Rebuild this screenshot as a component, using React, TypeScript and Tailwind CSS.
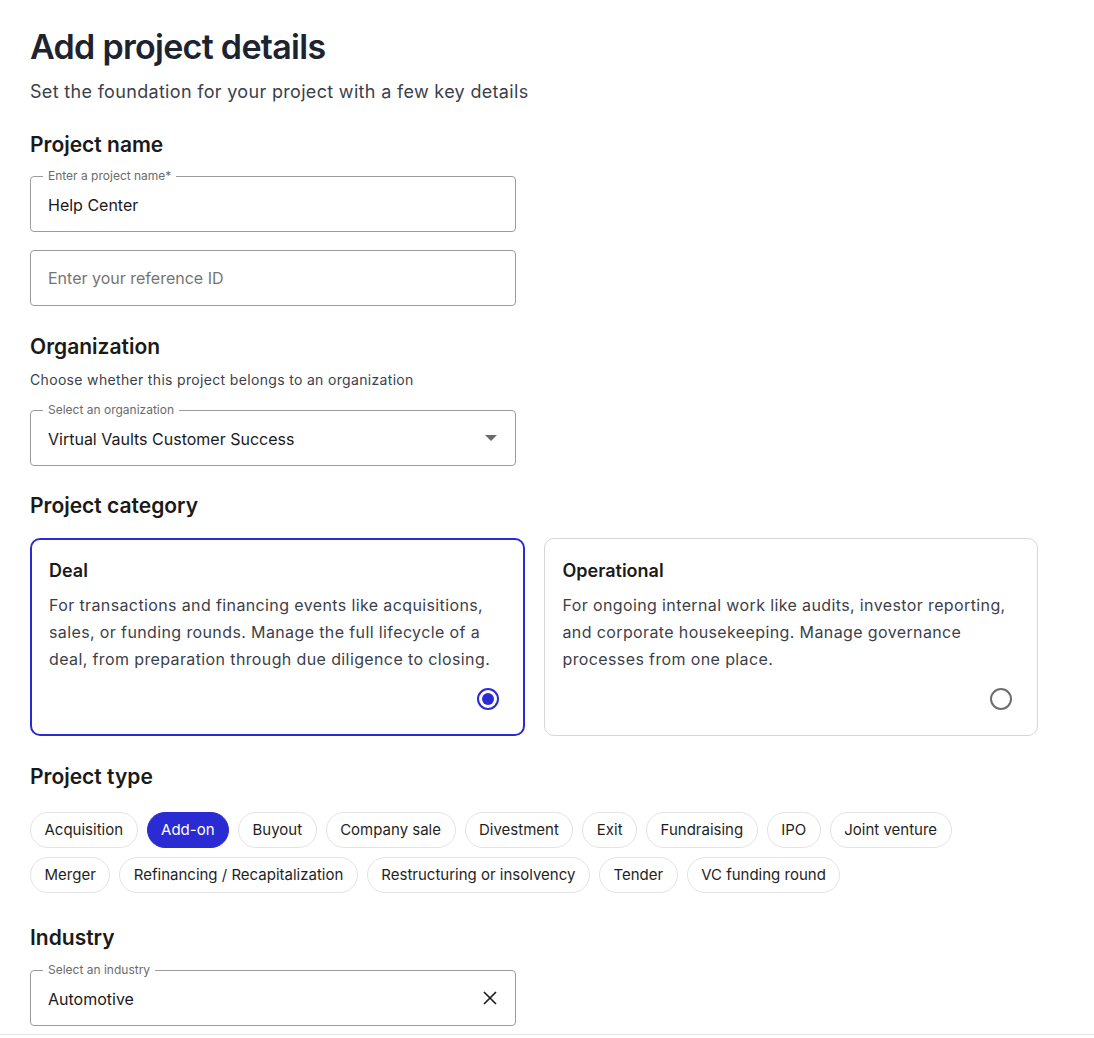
import React from "react";

const font = { fontFamily: "Inter, 'Noto Sans', sans-serif" };

function OutlinedField({ label, value, placeholder, right }: { label?: string; value?: string; placeholder?: string; right?: React.ReactNode }) {
  return (
    <div className="relative w-[486px] h-[56px] border border-[#9b9b9b] rounded-[4px] pl-[17px] pr-[18px] flex items-center">
      {label && (
        <div className="absolute left-[12px] -top-[8px] bg-white px-[5px] text-[12px] leading-[14px] text-[#6b6b6b]">{label}</div>
      )}
      <div className={`flex-1 text-[16px] leading-[22px] ${value ? "text-[#1a1a1a]" : "text-[#757575]"} ${label ? "mt-[2px]" : ""}`}>
        {value ?? placeholder}
      </div>
      {right && <div className="flex items-center">{right}</div>}
    </div>
  );
}

function Card({ title, text, selected }: { title: string; text: string; selected?: boolean }) {
  return (
    <div
      className={`flex-1 h-[198px] rounded-[10px] flex flex-col ${
        selected ? "border-2 border-[#2b2bd4] px-[17px] pt-[19px] pb-[24px]" : "border border-[#d6d6d9] px-[18px] pt-[20px] pb-[25px]"
      }`}
    >
      <div className="text-[18px] font-semibold text-[#1a1a1a] leading-[24px]">{title}</div>
      <div className="text-[16px] leading-[27px] tracking-[0.38px] text-[#3c3f4a] mt-[9px]">{text}</div>
      <div className="mt-auto flex justify-end pr-[7px]">
        {selected ? (
          <div className="w-[22px] h-[22px] rounded-full border-2 border-[#2b2bd4] flex items-center justify-center">
            <div className="w-[12px] h-[12px] rounded-full bg-[#2b2bd4]" />
          </div>
        ) : (
          <div className="w-[22px] h-[22px] rounded-full border-2 border-[#6e6e6e]" />
        )}
      </div>
    </div>
  );
}

const types1 = ["Acquisition", "Add-on", "Buyout", "Company sale", "Divestment", "Exit", "Fundraising", "IPO", "Joint venture"];
const types2 = ["Merger", "Refinancing / Recapitalization", "Restructuring or insolvency", "Tender", "VC funding round"];

function Chip({ label }: { label: string }) {
  const sel = label === "Add-on";
  return (
    <div
      className={`h-[36px] px-[13.5px] rounded-full flex items-center text-[15px] ${
        sel ? "bg-[#2b2bd4] text-white border border-[#2b2bd4]" : "bg-white text-[#1f1f1f] border border-[#e3e3e3]"
      }`}
    >
      {label}
    </div>
  );
}

function Heading({ children, className = "" }: { children: React.ReactNode; className?: string }) {
  return <h2 className={`text-[21px] leading-[28px] font-semibold text-[#1a1a1a] ${className}`}>{children}</h2>;
}

export default function App() {
  return (
    <div style={font} className="w-[1094px] h-[1038px] bg-white overflow-hidden relative">
      <div className="pl-[30px] pt-[26px]">
        <h1 className="text-[34px] leading-[42px] font-semibold text-[#1e2330] tracking-[-0.7px]">Add project details</h1>
        <p className="text-[18px] leading-[24px] tracking-[0.32px] text-[#3b3f4c] mt-[12px]">Set the foundation for your project with a few key details</p>

        <Heading className="mt-[27px]">Project name</Heading>
        <div className="mt-[17px] flex flex-col gap-[18px]">
          <OutlinedField label="Enter a project name*" value="Help Center" />
          <OutlinedField placeholder="Enter your reference ID" />
        </div>

        <Heading className="mt-[27px]">Organization</Heading>
        <p className="text-[14px] leading-[20px] tracking-[0.33px] text-[#3b3f4c] mt-[9px]">Choose whether this project belongs to an organization</p>
        <div className="mt-[20px]">
          <OutlinedField
            label="Select an organization"
            value="Virtual Vaults Customer Success"
            right={
              <svg width="12" height="6" viewBox="0 0 12 6">
                <path d="M0 0 L12 0 L6 6 Z" fill="#6b6b6b" />
              </svg>
            }
          />
        </div>

        <Heading className="mt-[26px]">Project category</Heading>
        <div className="mt-[18px] flex gap-[19px] w-[1008px]">
          <Card
            selected
            title="Deal"
            text="For transactions and financing events like acquisitions, sales, or funding rounds. Manage the full lifecycle of a deal, from preparation through due diligence to closing."
          />
          <Card
            title="Operational"
            text="For ongoing internal work like audits, investor reporting, and corporate housekeeping. Manage governance processes from one place."
          />
        </div>

        <Heading className="mt-[27px]">Project type</Heading>
        <div className="mt-[21px] flex flex-col gap-[9px]">
          <div className="flex gap-[9px]">
            {types1.map((t) => (
              <Chip key={t} label={t} />
            ))}
          </div>
          <div className="flex gap-[9px]">
            {types2.map((t) => (
              <Chip key={t} label={t} />
            ))}
          </div>
        </div>

        <Heading className="mt-[31px]">Industry</Heading>
        <div className="mt-[18px]">
          <OutlinedField
            label="Select an industry"
            value="Automotive"
            right={
              <svg width="14" height="14" viewBox="0 0 14 14">
                <path d="M1 1 L13 13 M13 1 L1 13" stroke="#1a1a1a" strokeWidth="1.6" />
              </svg>
            }
          />
        </div>
      </div>
      <div className="absolute left-0 right-0 top-[1034px] h-px bg-[#e3e3e3]" />
    </div>
  );
}
